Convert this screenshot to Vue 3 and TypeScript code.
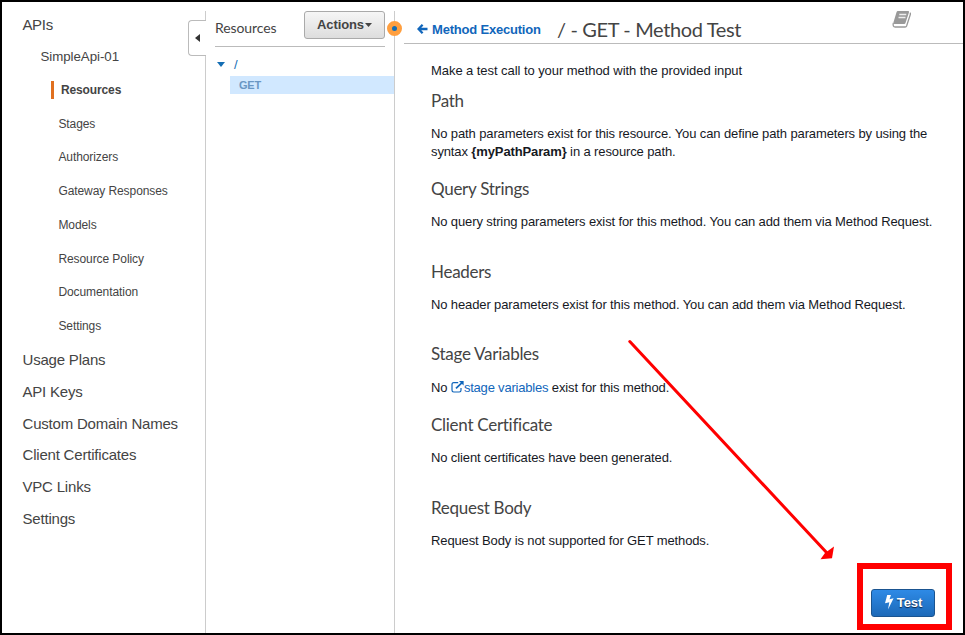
<script setup lang="ts">
interface Section {
  title: string
  kind: 'text' | 'path' | 'stage'
  text?: string
  roomy?: boolean
}

const apiItems: string[] = [
  'Resources',
  'Stages',
  'Authorizers',
  'Gateway Responses',
  'Models',
  'Resource Policy',
  'Documentation',
  'Settings',
]

const mainItems: string[] = [
  'Usage Plans',
  'API Keys',
  'Custom Domain Names',
  'Client Certificates',
  'VPC Links',
  'Settings',
]

const sections: Section[] = [
  { title: 'Path', kind: 'path' },
  {
    title: 'Query Strings',
    kind: 'text',
    text: 'No query string parameters exist for this method. You can add them via Method Request.',
    roomy: true,
  },
  {
    title: 'Headers',
    kind: 'text',
    text: 'No header parameters exist for this method. You can add them via Method Request.',
    roomy: true,
  },
  { title: 'Stage Variables', kind: 'stage' },
  {
    title: 'Client Certificate',
    kind: 'text',
    text: 'No client certificates have been generated.',
    roomy: true,
  },
  { title: 'Request Body', kind: 'text', text: 'Request Body is not supported for GET methods.' },
]
</script>

<template>
  <div class="window">
    <nav class="sidebar">
      <a class="top-link">APIs</a>
      <a class="api-name">SimpleApi-01</a>
      <ul class="api-list">
        <li v-for="(item, i) in apiItems" :key="item" :class="{ active: i === 0 }">
          <span>{{ item }}</span>
        </li>
      </ul>
      <ul class="main-list">
        <li v-for="item in mainItems" :key="item">{{ item }}</li>
      </ul>
      <button class="collapse" aria-label="Collapse">
        <svg width="5" height="8" viewBox="0 0 5 8"><path d="M5 0V8L0 4Z" fill="#333" /></svg>
      </button>
    </nav>

    <section class="tree">
      <header class="tree-head">
        <h2>Resources</h2>
        <button class="actions">
          Actions
          <svg width="7" height="4" viewBox="0 0 7 4"><path d="M0 0H7L3.5 4Z" fill="#444" /></svg>
        </button>
      </header>
      <div class="root">
        <svg width="8" height="5" viewBox="0 0 8 5"><path d="M0 0H8L4 5Z" fill="#146eb4" /></svg>
        <span>/</span>
      </div>
      <div class="method">GET</div>
      <span class="handle"></span>
    </section>

    <main class="content">
      <header class="content-head">
        <a class="back">
          <svg width="11" height="10" viewBox="0 0 11 10">
            <path d="M5.6 .8L1.5 5L5.6 9.2M2 5H10.5" fill="none" stroke="#1166bb" stroke-width="2.3" />
          </svg>
          Method Execution
        </a>
        <h1>/ - GET - Method Test</h1>
        <svg class="book" width="20" height="19" viewBox="0 0 20 19">
          <path d="M5.8 1H16.2Q17.3 1 17 2.2L13.4 13.2Q13.1 14 12.2 14H2.5Q.9 14 1.4 12.4L4.6 2Q4.9 1 5.8 1Z" fill="#999" />
          <path d="M1.3 13Q.5 17 3.2 17H13.2Q14.2 17 14.6 16L18.4 4.2Q18.7 3.2 17.8 2.8" fill="none" stroke="#999" stroke-width="1.3" />
          <path d="M7.3 4.5H14.3M6.5 7.5H13.5" stroke="#eee" stroke-width="1.3" />
        </svg>
      </header>

      <div class="body">
        <p class="intro">Make a test call to your method with the provided input</p>
        <section v-for="s in sections" :key="s.title" class="group" :class="{ roomy: s.roomy }">
          <h3>{{ s.title }}</h3>
          <p v-if="s.kind === 'path'">
            No path parameters exist for this resource. You can define path parameters by using the<br />
            syntax <b>{myPathParam}</b> in a resource path.
          </p>
          <p v-else-if="s.kind === 'stage'">
            No
            <a class="link"><svg width="13" height="12" viewBox="0 0 13 12">
              <path d="M7.2 1.7H2.7Q1 1.7 1 3.4V9.3Q1 11 2.7 11H8.3Q10 11 10 9.3V7" fill="none" stroke="#1166bb" stroke-width="1.2" />
              <path d="M5 7.3L10.8 1.8" stroke="#1166bb" stroke-width="1.7" />
              <path d="M8 0H12.6V4.6Z" fill="#1166bb" />
            </svg>stage variables</a>
            exist for this method.
          </p>
          <p v-else>{{ s.text }}</p>
        </section>
      </div>

      <footer class="foot">
        <div class="highlight">
          <button class="test">
            <svg width="10" height="15" viewBox="0 0 10 15">
              <path d="M3.2 0H7L5.5 4.2L9.6 3.3L4 14.5L5.3 7.2L1 8.2Z" fill="#fff" />
            </svg>
            Test
          </button>
        </div>
      </footer>
    </main>

    <svg class="arrow" width="220" height="230" viewBox="0 0 220 230">
      <path d="M9.8 10.500L207 222" stroke="#f00" stroke-width="3" stroke-linecap="round" />
      <path d="M214 215.500L212 227.300L200.500 228.300L205 222Z" fill="#f00" />
    </svg>
  </div>
</template>

<style>
body {
  margin: 0;
  background: #fff;
}
</style>

<style scoped>
* {
  box-sizing: border-box;
}
.window {
  position: relative;
  display: flex;
  width: 965px;
  height: 635px;
  border: 2px solid #000;
  background: #fff;
  overflow: hidden;
  font-family: "Liberation Sans", Arial, sans-serif;
  font-size: 13px;
  color: #16191f;
}
h1, h2, h3, p, ul {
  margin: 0;
  padding: 0;
  font-weight: 400;
}
ul {
  list-style: none;
}
button {
  font-family: inherit;
  padding: 0;
}
.sidebar {
  position: relative;
  display: flex;
  flex-direction: column;
  width: 204px;
  padding-top: 7px;
  color: #444;
  background: linear-gradient(#ccc, #ccc) right 9px / 1px 100% no-repeat;
}
.top-link {
  padding-left: 20.4px;
  font-size: 15px;
  line-height: 32px;
  letter-spacing: -0.3px;
}
.api-name {
  padding-left: 38.5px;
  font-size: 13.3px;
  line-height: 32px;
  letter-spacing: -0.05px;
}
.api-list li {
  display: flex;
  align-items: center;
  height: 33.75px;
  padding-left: 56.4px;
  font-size: 12px;
  letter-spacing: -0.08px;
}
.api-list .active {
  padding-left: 49px;
  font-weight: 700;
  letter-spacing: -0.13px;
}
.active span {
  padding-left: 7px;
  line-height: 18px;
  border-left: 3px solid #e07020;
}
.main-list {
  padding-top: 1px;
  letter-spacing: -0.2px;
}
.main-list li {
  padding-left: 20.5px;
  font-size: 15px;
  line-height: 31.8px;
}
.collapse {
  position: absolute;
  top: 18px;
  right: 0;
  display: flex;
  align-items: center;
  justify-content: center;
  width: 18px;
  height: 36px;
  border: 1px solid #bbb;
  border-right: 0;
  border-radius: 4px 0 0 4px;
  background: #fff;
}
.tree {
  position: relative;
  width: 189px;
  padding: 9px 0 0 9px;
  background: linear-gradient(#ccc, #ccc) right 9px / 1px 100% no-repeat;
}
.tree-head {
  display: flex;
  justify-content: space-between;
  width: 170px;
  height: 36px;
  border-bottom: 1px solid #bbb;
}
.tree-head h2 {
  font-family: Lato, sans-serif;
  font-size: 14px;
  line-height: 34px;
  letter-spacing: -0.1px;
  color: #444;
}
.actions {
  display: flex;
  align-items: center;
  justify-content: center;
  gap: 1px;
  width: 81px;
  height: 28px;
  padding-bottom: 1px;
  border: 1px solid #aaa;
  border-radius: 3px;
  background: linear-gradient(#f6f6f6, #ddd);
  font-size: 13px;
  font-weight: 700;
  letter-spacing: -0.1px;
  color: #444;
}
.root {
  display: flex;
  align-items: center;
  gap: 9px;
  height: 29px;
  padding: 5px 0 0 2px;
  color: #146eb4;
}
.method {
  margin: 0 1px 0 15px;
  padding-left: 9px;
  font-size: 11px;
  font-weight: 700;
  line-height: 18px;
  letter-spacing: -0.2px;
  color: #6a97c4;
  background: #d1e8ff;
}
.handle {
  position: absolute;
  top: 19px;
  right: -7px;
  width: 15px;
  height: 15px;
  border: 5px solid #ff9f3f;
  border-radius: 50%;
  background: #146eb4;
}
.content {
  display: flex;
  flex-direction: column;
  flex: 1;
  min-width: 0;
}
.content-head {
  display: flex;
  flex-shrink: 0;
  align-items: center;
  height: 42px;
  margin-left: 9px;
  padding: 13px 51px 0 13px;
  border-bottom: 1px solid #bbb;
}
.back {
  display: flex;
  align-items: center;
  gap: 4px;
  width: 140px;
  font-weight: 700;
  letter-spacing: -0.2px;
  white-space: nowrap;
  color: #1166bb;
}
.content-head h1 {
  font-family: Lato, sans-serif;
  font-size: 20px;
  line-height: 26px;
  letter-spacing: -0.36px;
  color: #444;
}
.book {
  align-self: flex-start;
  margin: -5px 0 0 auto;
}
.body {
  flex: 1;
  min-height: 0;
  padding: 18px 0 0 36px;
  line-height: 17.5px;
  letter-spacing: -0.12px;
  white-space: nowrap;
}
.intro {
  margin-bottom: 10.6px;
  letter-spacing: -0.06px;
}
.group {
  padding-bottom: 17.5px;
}
.group.roomy {
  padding-bottom: 30px;
}
.group h3 {
  margin-bottom: 13.3px;
  font-family: Lato, sans-serif;
  font-size: 17px;
  line-height: 22px;
  letter-spacing: -0.28px;
  color: #444;
}
.link {
  letter-spacing: -0.2px;
  color: #1166bb;
}
.link svg {
  vertical-align: -1px;
}
.foot {
  display: flex;
  flex-shrink: 0;
  justify-content: flex-end;
  padding: 0 11px 3px 0;
}
.highlight {
  display: flex;
  align-items: flex-end;
  justify-content: center;
  width: 95px;
  height: 67px;
  padding: 0 3px 7px 0;
  border: 6px solid #f00;
}
.test {
  display: flex;
  align-items: center;
  justify-content: center;
  gap: 3px;
  width: 64px;
  height: 28px;
  padding-bottom: 1px;
  border: 1px solid #1a5490;
  border-radius: 3px;
  background: linear-gradient(#2e8ae6, #1c69b8);
  font-size: 13px;
  font-weight: 700;
  letter-spacing: -0.1px;
  color: #fff;
  text-shadow: 0 1px 1px #124;
}
.arrow {
  position: absolute;
  left: 618px;
  top: 329px;
}
</style>
